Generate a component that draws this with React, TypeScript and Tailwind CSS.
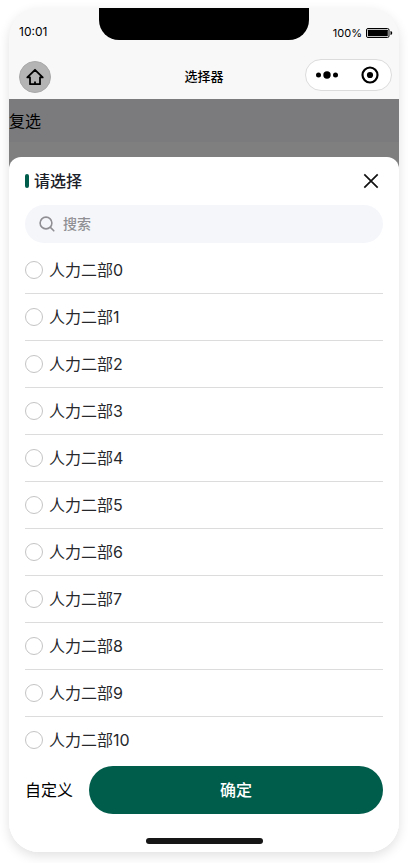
import { useState } from 'react';

const departments = Array.from({ length: 11 }, (_, index) => `人力二部${index}`);

function StatusBar() {
  return (
    <div className="relative flex h-[47px] items-center justify-between pl-[10px] pr-[6px] text-black">
      <span className="text-xs">10:01</span>
      {/* Notch */}
      <div className="absolute left-1/2 top-0 h-8 w-[210px] -translate-x-1/2 rounded-b-[20px] bg-black"></div>
      <div className="flex items-center gap-1 pt-[3px]">
        <span className="text-[11px]">100%</span>
        <svg width="27" height="10" viewBox="0 0 27 10" aria-hidden="true">
          <rect x="0.5" y="0.5" width="22.5" height="9" rx="1.5" fill="#fff" stroke="#000" />
          <rect x="1.8" y="1.8" width="20" height="6.4" rx="0.5" />
          <path d="M24.500 3c1.200.2 1.700 1 1.700 2s-.5 1.800-1.700 2z" />
        </svg>
      </div>
    </div>
  );
}

function NavBar() {
  return (
    <div className="relative flex h-11 items-center justify-between pl-[10px] pr-[7px]">
      <button aria-label="首页" className="flex size-8 items-center justify-center rounded-full border border-[#a9a9a9] bg-[#b4b4b4]">
        <svg width="18" height="18" viewBox="0 0 18 18" fill="none" stroke="#000" strokeWidth="1.8" strokeLinejoin="round" aria-hidden="true">
          <path d="M9 1.800 1.300 9.400H4v6.800h10V9.400h2.700z" />
          <path d="M9 13.400v2.800" />
        </svg>
      </button>
      <h1 className="absolute left-1/2 -translate-x-1/2 text-[13px] font-medium text-black">选择器</h1>
      <div className="mb-1 flex h-8 w-[87px] items-center rounded-full border border-[#dcdcdc] bg-white">
        <button aria-label="更多" className="flex flex-1 justify-center">
          <svg width="24" height="8" viewBox="0 0 24 8" aria-hidden="true">
            <circle cx="3.5" cy="4" r="2.5" />
            <circle cx="12" cy="4" r="3.7" />
            <circle cx="20.5" cy="4" r="2.5" />
          </svg>
        </button>
        <button aria-label="关闭小程序" className="flex flex-1 justify-center">
          <svg width="18" height="18" viewBox="0 0 18 18" aria-hidden="true">
            <circle cx="9" cy="9" r="7.5" fill="none" stroke="#000" strokeWidth="2.2" />
            <circle cx="9" cy="9" r="3.1" />
          </svg>
        </button>
      </div>
    </div>
  );
}

function PickerSheet() {
  const [keyword, setKeyword] = useState('');
  const [selected, setSelected] = useState<string[]>([]);

  const toggle = (name: string) => {
    setSelected((prev) => (prev.includes(name) ? prev.filter((n) => n !== name) : [...prev, name]));
  };

  return (
    <section className="-mt-3 rounded-t-xl bg-white px-4 pb-2">
      <div className="flex h-12 items-center justify-between">
        <h2 className="flex items-center gap-[5px] text-base font-medium text-[#1d2129]">
          <span className="h-[14px] w-1 rounded-sm bg-[#005c4b]"></span>
          请选择
        </h2>
        <button aria-label="关闭" className="flex size-6 items-center justify-center">
          <svg width="16" height="16" viewBox="0 0 16 16" fill="none" stroke="#111" strokeWidth="1.7" aria-hidden="true">
            <path d="M1.300 1.300l13.400 13.400M14.700 1.300 1.300 14.700" />
          </svg>
        </button>
      </div>

      <label className="mb-1 flex h-[38px] items-center gap-2 rounded-full bg-[#f5f6fa] px-[14px]">
        <svg width="16" height="16" viewBox="0 0 16 16" fill="none" stroke="#909094" strokeWidth="1.6" strokeLinecap="round" aria-hidden="true">
          <circle cx="7" cy="7" r="5.9" />
          <path d="M11.400 11.400l3.400 3.400" />
        </svg>
        <input
          type="text"
          aria-label="搜索"
          placeholder="搜索"
          value={keyword}
          onChange={(e) => setKeyword(e.target.value)}
          className="min-w-0 flex-1 bg-transparent text-sm font-medium text-[#1d2129] outline-none placeholder:text-[#909094]"
        />
      </label>

      <ul className="divide-y divide-[#dcdcdc]">
        {departments
          .filter((name) => name.includes(keyword))
          .map((name) => (
            <li key={name}>
              <label className="flex h-[46px] items-center gap-[6px] text-base text-[#26282c]">
                <input
                  type="checkbox"
                  checked={selected.includes(name)}
                  onChange={() => toggle(name)}
                  className="size-[18px] appearance-none rounded-full border border-[#c4c4c4] bg-white checked:border-[#005c4b] checked:bg-[#005c4b]"
                />
                {name}
              </label>
            </li>
          ))}
      </ul>

      <div className="mt-[3px] flex items-center gap-4">
        <button className="text-base text-black">自定义</button>
        <button className="h-12 flex-1 rounded-full bg-[#005c4b] text-base font-medium text-white">确定</button>
      </div>

      {/* Home indicator */}
      <div className="mx-auto mt-6 h-[6px] w-[117px] rounded-full bg-[#161616]"></div>
    </section>
  );
}

export default function App() {
  return (
    <div className="bg-white px-[9px] pb-[11px] pt-2 font-[Inter,'Noto_Sans_CJK_SC',sans-serif]">
      <div className="overflow-hidden rounded-[30px] bg-[#f8f8f8] shadow-[0_4px_12px_rgba(0,0,0,0.12)]">
        <header>
          <StatusBar />
          <NavBar />
        </header>
        <main className="bg-white">
          {/* Page content dimmed behind the sheet */}
          <div className="bg-[#7f7f7f] pb-[27px]">
            <div className="flex h-[43px] items-center bg-[#7b7b7d] text-base text-black">复选</div>
          </div>
          <PickerSheet />
        </main>
      </div>
    </div>
  );
}
